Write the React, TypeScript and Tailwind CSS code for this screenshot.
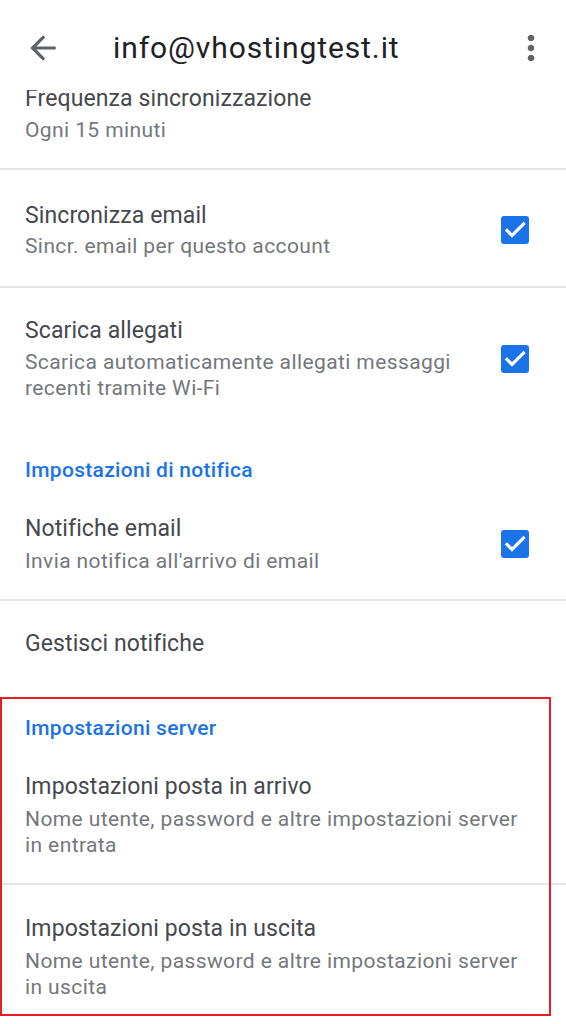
import React from "react";

function Check() {
  return (
    <div className="w-[28px] h-[28px] shrink-0 rounded-[3px] bg-[#1a73e8] flex items-center justify-center">
      <svg width="28" height="28" viewBox="0 0 28 28" fill="none">
        <polyline points="6,14.5 11,19.5 22.5,8" stroke="#fff" strokeWidth="3.2" strokeLinecap="square" />
      </svg>
    </div>
  );
}

function Divider() {
  return <div className="h-[2px] bg-[#e6e6e6]" />;
}

function Row({
  title,
  sub,
  checked,
  pt = "pt-[29px]",
  pb = "pb-[28px]",
  mt = "mt-[3px]",
}: {
  title: string;
  sub?: string[];
  checked?: boolean;
  pt?: string;
  pb?: string;
  mt?: string;
}) {
  return (
    <div className={`flex items-center pl-[25px] pr-[37px] ${pt} ${pb}`}>
      <div className="flex-1">
        <div className="text-[23px] leading-[30px] text-[#45484c] tracking-[0.1px]">{title}</div>
        {sub && (
          <div className={`${mt} text-[21px] leading-[26px] text-[#74777b] tracking-[0.4px]`}>
            {sub.map((s) => (
              <div key={s}>{s}</div>
            ))}
          </div>
        )}
      </div>
      {checked && <Check />}
    </div>
  );
}

export default function App() {
  return (
    <div className="relative w-[566px] h-[1024px] overflow-hidden bg-white" style={{ fontFamily: "Roboto, 'Liberation Sans', sans-serif" }}>
      {/* app bar sits over the scrolled list */}
      <div className="absolute top-0 left-0 right-0 h-[90px] bg-white z-10 flex items-start pt-[28px]">
        <svg className="ml-[24px] mt-[1px]" width="38" height="38" viewBox="0 0 24 24" fill="#5f6368">
          <path d="M20 11H7.83l5.59-5.59L12 4l-8 8 8 8 1.41-1.41L7.83 13H20v-2z" />
        </svg>
        <div className="ml-[51px] text-[30px] leading-[40px] text-[#202124] tracking-[0.9px]">info@vhostingtest.it</div>
        <svg className="ml-auto mr-[15px]" width="40" height="40" viewBox="0 0 24 24" fill="#5f6368">
          <path d="M12 8c1.1 0 2-.9 2-2s-.9-2-2-2-2 .9-2 2 .9 2 2 2zm0 2c-1.1 0-2 .9-2 2s.9 2 2 2 2-.9 2-2-.9-2-2-2zm0 6c-1.1 0-2 .9-2 2s.9 2 2 2 2-.9 2-2-.9-2-2-2z" />
        </svg>
      </div>

      <div className="pt-[54px]">
        <Row title="Frequenza sincronizzazione" sub={["Ogni 15 minuti"]} pt="pt-[30px]" pb="pb-[25px]" mt="mt-[3px]" />
        <Divider />
        <Row title="Sincronizza email" sub={["Sincr. email per questo account"]} checked pt="pt-[31px]" pb="pb-[27px]" mt="mt-[2px]" />
        <Divider />
        <Row
          title="Scarica allegati"
          sub={["Scarica automaticamente allegati messaggi", "recenti tramite Wi-Fi"]}
          checked
          pt="pt-[28px]"
          pb="pb-[0px]"
        />

        <div className="pl-[25px] pt-[56px] text-[21px] leading-[26px] font-medium text-[#1a73e8] tracking-[0.3px]">Impostazioni di notifica</div>
        <Row title="Notifiche email" sub={["Invia notifica all'arrivo di email"]} checked pt="pt-[31px]" pb="pb-[25px]" mt="mt-[4px]" />
        <Divider />
        <Row title="Gestisci notifiche" pt="pt-[28px]" pb="pb-[27px]" />

        <div className="relative">
          <div className="absolute top-[11px] left-0 w-[551px] h-[319px] border-2 border-[#ec1c24] pointer-events-none z-10" />
          <div className="pl-[25px] pt-[29px] text-[21px] leading-[26px] font-medium text-[#1a73e8] tracking-[0.3px]">Impostazioni server</div>
          <Row
            title="Impostazioni posta in arrivo"
            sub={["Nome utente, password e altre impostazioni server", "in entrata"]}
            pt="pt-[31px]"
            pb="pb-[25px]"
            mt="mt-[4px]"
          />
          <Divider />
          <Row
            title="Impostazioni posta in uscita"
            sub={["Nome utente, password e altre impostazioni server", "in uscita"]}
            pt="pt-[29px]"
            pb="pb-[24px]"
            mt="mt-[4px]"
          />
        </div>
      </div>
    </div>
  );
}
